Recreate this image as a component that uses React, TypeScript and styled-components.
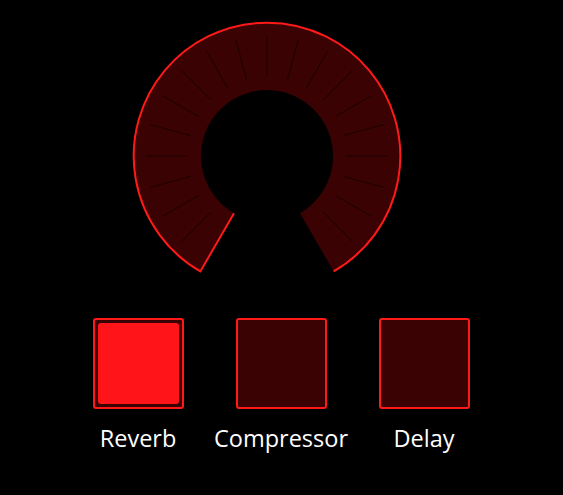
import React, { useState } from "react";
import styled, { createGlobalStyle } from "styled-components";

const GlobalStyle = createGlobalStyle`
  html, body {
    margin: 0;
    padding: 0;
    background: #000;
  }
  body {
    font-family: "Open Sans", "Noto Sans", sans-serif;
    color: #fff;
  }
`;

const Page = styled.div`
  width: 563px;
  height: 495px;
  background: #000;
  display: flex;
  flex-direction: column;
  align-items: stretch;
`;

const KnobArea = styled.div`
  display: flex;
  justify-content: center;
  padding-right: 30px;
  padding-top: 16px;
`;

const EffectsRow = styled.div`
  display: grid;
  grid-template-columns: repeat(3, 143px);
  justify-content: center;
  margin-top: 22px;
  margin-left: -1px;
`;

const Effect = styled.div`
  display: flex;
  flex-direction: column;
  align-items: center;
`;

const Pad = styled.button<{ $active: boolean }>`
  box-sizing: border-box;
  width: 91px;
  height: 91px;
  padding: 3px;
  border: 2px solid #ff1a1a;
  border-radius: 3px;
  background: #3a0203;
  cursor: pointer;
  display: flex;
  &::after {
    content: "";
    flex: 1;
    border-radius: 3px;
    background: ${(p) => (p.$active ? "#ff1419" : "transparent")};
  }
`;

const Label = styled.span`
  margin-top: 13px;
  font-size: 23.5px;
  line-height: 32px;
  color: #fff;
`;

const cx = 140;
const cy = 140;
const R = 133.3;
const r = 66;
const span = 150;

const pt = (rad: number, deg: number) => {
  const a = (deg * Math.PI) / 180;
  return [cx + rad * Math.sin(a), cy - rad * Math.cos(a)];
};

const Knob: React.FC = () => {
  const [os, oe, is, ie] = [pt(R, -span), pt(R, span), pt(r, -span), pt(r, span)];
  const fill = `M ${os[0]} ${os[1]} A ${R} ${R} 0 1 1 ${oe[0]} ${oe[1]} L ${ie[0]} ${ie[1]} A ${r} ${r} 0 1 0 ${is[0]} ${is[1]} Z`;
  const stroke = `M ${is[0]} ${is[1]} L ${os[0]} ${os[1]} A ${R} ${R} 0 1 1 ${oe[0]} ${oe[1]}`;
  const ticks: number[] = [];
  for (let d = -135; d <= 135; d += 15) ticks.push(d);
  return (
    <svg width={280} height={280} viewBox="0 0 280 280">
      <path d={fill} fill="#3a0203" />
      {ticks.map((d) => {
        const [x1, y1] = pt(79, d);
        const [x2, y2] = pt(121, d);
        return <line key={d} x1={x1} y1={y1} x2={x2} y2={y2} stroke="#1c0000" strokeWidth={1} />;
      })}
      <path d={stroke} fill="none" stroke="#ff1a1a" strokeWidth={2} strokeLinejoin="miter" />
    </svg>
  );
};

const effects = ["Reverb", "Compressor", "Delay"];

export default function App() {
  const [active, setActive] = useState<Record<string, boolean>>({ Reverb: true });
  return (
    <Page>
      <GlobalStyle />
      <KnobArea>
        <Knob />
      </KnobArea>
      <EffectsRow>
        {effects.map((e) => (
          <Effect key={e}>
            <Pad $active={!!active[e]} onClick={() => setActive((s) => ({ ...s, [e]: !s[e] }))} />
            <Label>{e}</Label>
          </Effect>
        ))}
      </EffectsRow>
    </Page>
  );
}
